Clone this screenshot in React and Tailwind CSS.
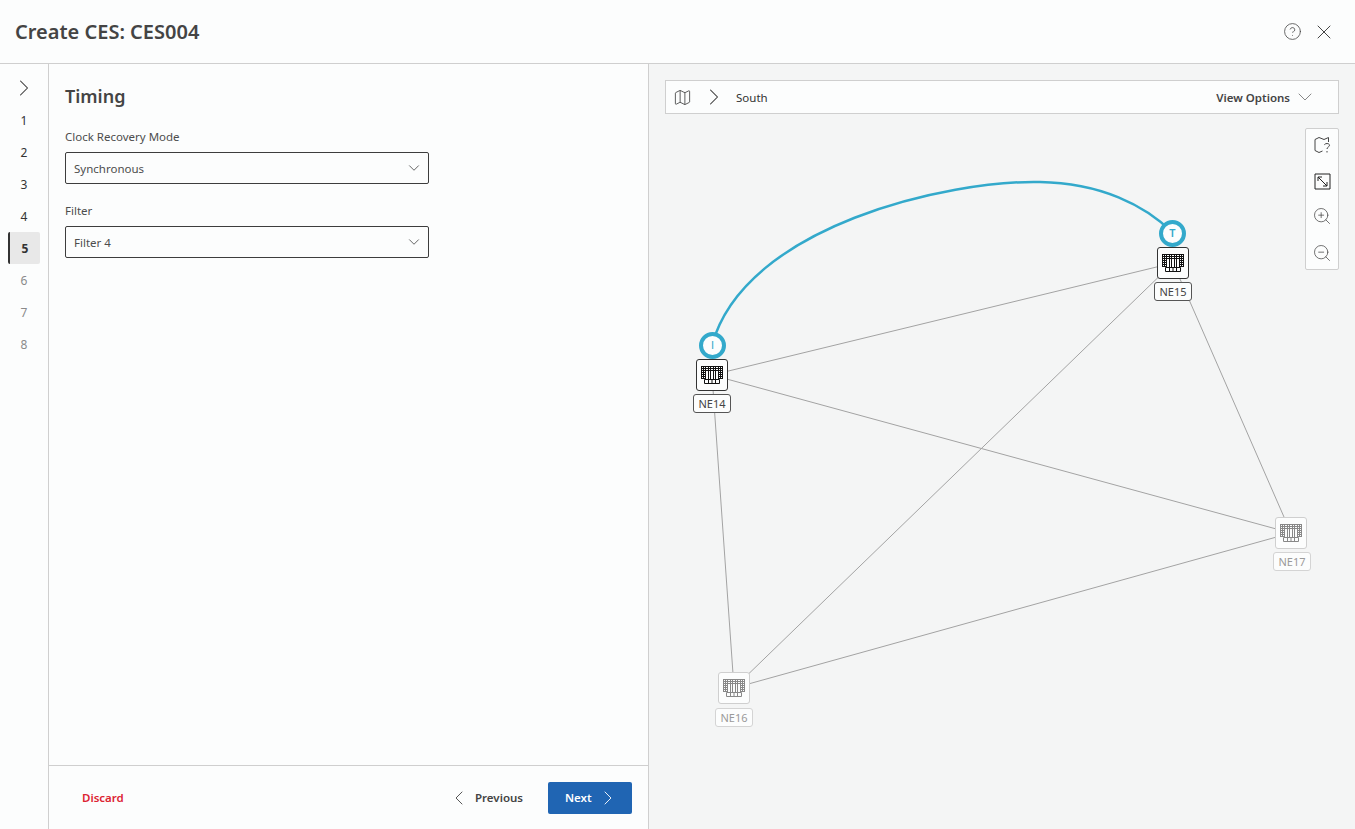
import { ChevronDown, ChevronLeft, ChevronRight, CircleHelp, Map, X, ZoomIn, ZoomOut } from 'lucide-react';

const steps = [1, 2, 3, 4, 5, 6, 7, 8];

// map nodes, page coords minus panel origin (649, 64)
const nodes = [
  { name: 'NE14', box: 'left-[47px] top-[295px]', label: 'left-[44px] top-[330px]', active: true },
  { name: 'NE15', box: 'left-[508px] top-[183px]', label: 'left-[505px] top-[218px]', active: true },
  { name: 'NE16', box: 'left-[69px] top-[608px]', label: 'left-[66px] top-[644px]', active: false },
  { name: 'NE17', box: 'left-[626px] top-[453px]', label: 'left-[624px] top-[488px]', active: false },
];

function RackIcon() {
  return (
    <svg width="24" height="20" viewBox="0 0 24 20" fill="none" stroke="currentColor" strokeWidth="1">
      <path d="M1 1.5H23M1 3.5H23M1 5.5H23" />
      <path d="M1 7.5H6M1 9.5H6M1 11.5H6M1 13.5H6M18 7.5H23M18 9.5H23M18 11.5H23M18 13.5H23" />
      <path d="M1.5 1V14M3.5 1V14M5.5 1V14M8.5 1V14.5M10.5 1V14.5M13.5 1V14.5M15.5 1V14.5M18.5 1V14M20.5 1V14M22.5 1V14" />
      <path d="M4.5 14.5V18.5H19.5V14.5H4.5M8.5 15V18.5M12 15V18.5M15.5 15V18.5" />
    </svg>
  );
}

function SelectBox({ label, value }) {
  return (
    <div className="mb-[18px]">
      <div className="text-[11.5px] leading-[18px] text-[#4d4d4d] mb-[6px]">{label}</div>
      <div className="h-8 w-[364px] border border-[#3d3d3d] rounded-[2px] flex items-center justify-between pl-2 pr-[5px] text-[11.5px] text-[#4d4d4d]">
        <span className="pt-px">{value}</span>
        <ChevronDown size={18} strokeWidth={1} className="text-[#333]" />
      </div>
    </div>
  );
}

export default function App() {
  return (
    <div className="w-[1355px] h-[829px] overflow-hidden flex flex-col bg-[#fcfdfd] text-[#3d3d3d] font-['Noto_Sans',sans-serif]">

      {/* header */}
      <header className="h-16 shrink-0 border-b border-[#cfcfcf] flex items-center justify-between pl-[15px] pr-[19px]">
        <h1 className="text-xl font-semibold text-[#444]">Create CES: CES004</h1>
        <div className="flex items-center gap-[10px] text-[#444]">
          <CircleHelp size={19} strokeWidth={1} />
          <X size={24} strokeWidth={1} />
        </div>
      </header>

      <div className="flex flex-1 min-h-0">

        {/* stepper */}
        <nav className="w-[49px] shrink-0 border-r border-[#cfcfcf] pt-2 pl-2 pr-2">
          <div className="h-8 flex items-center justify-center">
            <ChevronRight size={28} strokeWidth={0.9} className="text-[#333]" />
          </div>
          {steps.map((s) => (
            <div
              key={s}
              className={
                'w-8 h-8 flex items-center justify-center text-xs pt-px ' +
                (s === 5
                  ? 'bg-[#e8e8e8] border-l-2 border-[#333] font-bold text-[#333] rounded-[2px]'
                  : s > 5
                    ? 'text-[#8a8a8a]'
                    : 'text-[#333]')
              }
            >
              {s}
            </div>
          ))}
        </nav>

        {/* form column */}
        <section className="w-[600px] shrink-0 border-r border-[#cfcfcf] flex flex-col">
          <div className="flex-1 pl-4 pt-[17px]">
            <h2 className="text-lg leading-[30px] font-semibold text-[#444] mb-[17px]">Timing</h2>
            <SelectBox label="Clock Recovery Mode" value="Synchronous" />
            <SelectBox label="Filter" value="Filter 4" />
          </div>
          <footer className="h-[64px] shrink-0 border-t border-[#cfcfcf] flex items-center justify-between pl-[33px] pr-4">
            <span className="text-[11.5px] font-semibold text-[#dc2433] pt-px">Discard</span>
            <div className="flex items-center gap-[25px]">
              <div className="flex items-center gap-1 text-[11.5px] font-semibold text-[#444]">
                <ChevronLeft size={24} strokeWidth={0.9} />
                <span className="pt-px">Previous</span>
              </div>
              <div className="w-[84px] h-8 bg-[#2065b3] rounded-[2px] flex items-center pl-[17px] gap-1 text-[11.5px] font-semibold text-white">
                <span className="pt-px">Next</span>
                <ChevronRight size={24} strokeWidth={0.9} />
              </div>
            </div>
          </footer>
        </section>

        {/* map panel */}
        <section className="flex-1 relative bg-[#f4f5f5]">
          <svg className="absolute inset-0" width="706" height="765" fill="none">
            <g transform="translate(-649 -64)" stroke="#a3a3a3" strokeWidth="1">
              <path d="M712 375L1173 263" />
              <path d="M712 375L1291 533" />
              <path d="M712 375L734 688" />
              <path d="M1173 263L734 688" />
              <path d="M1173 263L1291 533" />
              <path d="M734 688L1291 533" />
              <path d="M712 345C745 225 950 180 1040 182C1100 183 1145 205 1173 233" stroke="#33a9cb" strokeWidth="2.5" />
            </g>
          </svg>

          {/* breadcrumb bar */}
          <div className="relative mx-4 mt-4 h-[34px] bg-[#fcfdfd] border border-[#cfcfcf] flex items-center pl-[7px] pr-[21px]">
            <Map size={19} strokeWidth={1} className="text-[#333]" />
            <ChevronRight size={28} strokeWidth={0.9} className="ml-[8px] text-[#333]" />
            <span className="ml-[8px] pt-px text-[11.5px] text-[#333]">South</span>
            <span className="ml-auto pt-px text-[11.5px] font-semibold text-[#444]">View Options</span>
            <ChevronDown size={24} strokeWidth={0.7} className="ml-[3px] text-[#555]" />
          </div>

          {/* zoom toolbar */}
          <div className="absolute left-[656px] top-[64px] w-[34px] h-[142px] bg-[#fcfdfd] border border-[#cfcfcf] rounded-[2px] flex flex-col items-center justify-between py-[6px] text-[#444]">
            <svg width="20" height="20" viewBox="0 0 20 20" fill="none" stroke="currentColor" strokeWidth="1">
              <path d="M3 4.5L7 2.5L12 4.5L16.5 2.5V7M3 4.5V15.5L7 17.5L10.5 16" />
              <path d="M12.5 10C12.5 8 17.5 8 17.5 10.2C17.5 12 15 12 15 14M15 16V17.5" />
            </svg>
            <svg width="17" height="17" viewBox="0 0 17 17" fill="none" stroke="#222" strokeWidth="1" className="mt-px">
              <path d="M1 1H16V16H1Z" />
              <path d="M4 4L13 13M4 8V4H8M13 9V13H9" />
            </svg>
            <ZoomIn size={20} strokeWidth={0.9} />
            <ZoomOut size={20} strokeWidth={0.9} />
          </div>

          {/* I / T endpoints */}
          <div className="absolute left-[50px] top-[268px] w-[27px] h-[27px] rounded-full border-[4px] border-[#33a9cb] bg-[#fcfdfd] flex items-center justify-center text-[11px] font-['Liberation_Sans',sans-serif] text-[#33a9cb]">I</div>
          <div className="absolute left-[510px] top-[156px] w-[27px] h-[27px] rounded-full border-[4px] border-[#33a9cb] bg-[#fcfdfd] flex items-center justify-center text-[11px] font-semibold text-[#33a9cb]">T</div>

          {nodes.map((n) => (
            <div key={n.name}>
              <div
                className={
                  'absolute w-8 h-8 rounded-[3px] flex items-center justify-center bg-[#fcfdfd] border ' +
                  n.box + ' ' +
                  (n.active ? 'border-[#333] text-[#111]' : 'border-[#cfcfcf] text-[#888]')
                }
              >
                <RackIcon />
              </div>
              <div
                className={
                  'absolute w-[38px] h-[19px] rounded-[3px] flex items-center justify-center pt-px bg-[#fcfdfd] border text-[11px] ' +
                  n.label + ' ' +
                  (n.active ? 'border-[#555] text-[#444]' : 'border-[#d4d4d4] text-[#9a9a9a]')
                }
              >
                {n.name}
              </div>
            </div>
          ))}
        </section>
      </div>
    </div>
  );
}
